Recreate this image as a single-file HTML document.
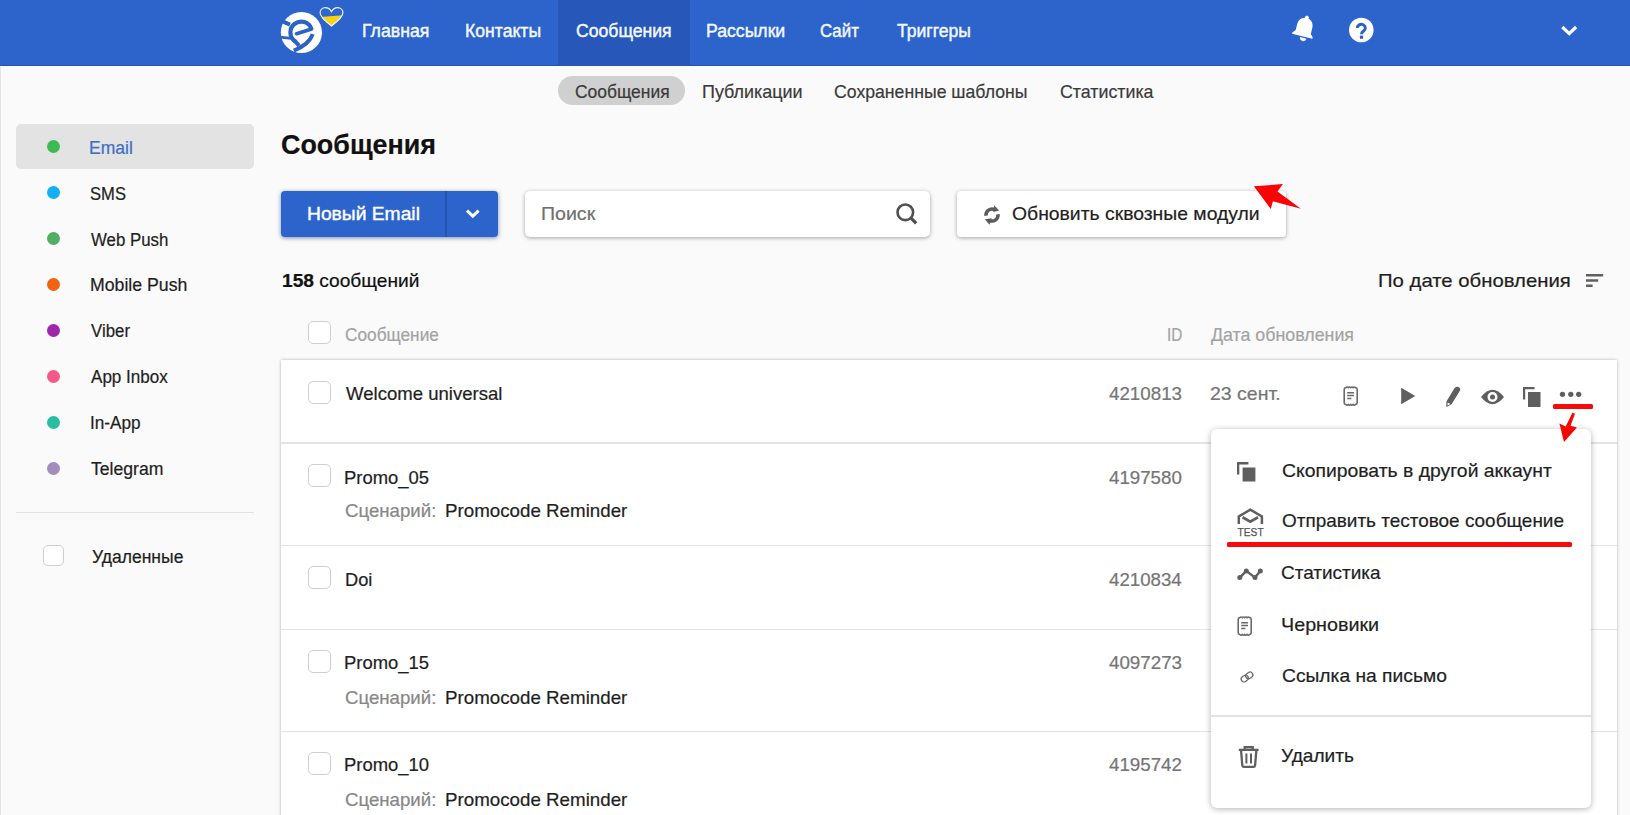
<!DOCTYPE html>
<html lang="ru"><head><meta charset="utf-8"><title>Сообщения</title>
<style>
*{box-sizing:border-box;margin:0;padding:0}
html,body{width:1630px;height:815px;overflow:hidden;background:#fafafa;font-family:"Liberation Sans",sans-serif}
.abs,.t,svg.i{position:absolute}
.t{white-space:nowrap;transform-origin:0 50%;-webkit-text-stroke:0.22px currentColor}
.t b{font-weight:700}
#hdr{left:0;top:0;width:1630px;height:65.7px;background:#2c64cc;box-shadow:inset 0 -1px 0 rgba(20,50,120,.35)}
#act{left:558.4px;top:0;width:131.2px;height:65.7px;background:#2758b9}
#pill{left:558.3px;top:76px;width:126.6px;height:29px;border-radius:14.5px;background:#d0d0d0}
#sel{left:16px;top:124px;width:238.3px;height:45.4px;border-radius:5px;background:#e3e3e3}
.dot{width:13.2px;height:13.2px;border-radius:50%;left:46.9px}
#sdiv{left:16px;top:511.9px;width:238px;height:1.2px;background:#e2e2e2}
.cb{width:22.5px;height:22.5px;border:1.5px solid #cfcfcf;border-radius:5px;background:#fff;left:308.3px}
#btn{left:281px;top:191px;width:217px;height:45.6px;border-radius:4px;background:#2c64cc;box-shadow:0 1px 4px rgba(20,50,120,.55)}
#btnd{left:445.4px;top:191px;width:1.5px;height:45.6px;background:#2555b3}
#srch{left:524.8px;top:190.8px;width:405.6px;height:45.8px;border-radius:5px;background:#fff;box-shadow:0 1px 4px rgba(0,0,0,.35)}
#upd{left:956.7px;top:191px;width:329.6px;height:46px;border-radius:4px;background:#fff;box-shadow:0 1px 4px rgba(0,0,0,.35)}
#card{left:281px;top:359.8px;width:1336.2px;height:470px;background:#fff;box-shadow:0 0 3px rgba(0,0,0,.3)}
.rd{left:281px;width:1336px;height:1.3px;background:#e4e4e4}
#menu{left:1211px;top:429.4px;width:380.3px;height:378.4px;border-radius:6px;background:#fff;box-shadow:0 1px 6px rgba(0,0,0,.3)}
#mdiv{left:1211px;top:715.1px;width:380px;height:1.5px;background:#e2e2e2}
.red{background:#f80a0a}
</style></head><body>
<div class="abs" id="hdr"></div><div class="abs" id="act"></div>
<div class="abs" style="left:0;top:67px;width:1.300px;height:750px;background:#e6e6e6"></div><div class="abs" id="pill"></div><div class="abs" id="sel"></div>
<!-- logo -->
<svg class="i" style="left:272px;top:2px" width="80" height="60" viewBox="0 0 80 60">
 <circle cx="29.4" cy="30.5" r="20.6" fill="#fff"/>
 <g fill="none" stroke="#2c62c6" stroke-linecap="round">
  <path d="M39.4 26.9 A10.8 10.8 0 1 0 22.9 39.2" stroke-width="4.2" stroke-linecap="butt"/>
  <path d="M40.7 32.2 Q37.2 42.6 21.8 48.6" stroke-width="4" stroke-linecap="butt"/>
  <path d="M22.4 38.4 L27.2 43.8" stroke-width="4" stroke-linecap="butt"/>
  <path d="M24.6 31.7 L39.6 27.1" stroke-width="3.7"/>
  <path d="M18 22.6 L10 19.2" stroke-width="4" stroke-linecap="butt"/>
  <path d="M19 36.3 L8 35.2" stroke-width="2.8" stroke-linecap="butt"/>
 </g>
 <g transform="translate(47.5,5)">
  <clipPath id="hc"><path d="M12 18.9 C4 13 0.6 9.5 0.6 5.8 C0.6 2.8 2.9 0.6 5.8 0.6 C8.4 0.6 10.6 2 12 4.6 C13.4 2 15.6 0.6 18.2 0.6 C21.100 0.6 23.4 2.8 23.4 5.8 C23.4 9.5 20 13 12 18.9Z"/></clipPath>
  <g clip-path="url(#hc)"><rect x="0" y="0" width="24" height="20" fill="#2f66cc"/><path d="M0 10.1 L24 8.2 V20 H0Z" fill="#f7d313"/></g>
  <path d="M12 18.900 C4 13 0.600 9.500 0.600 5.800 C0.600 2.800 2.900 0.600 5.800 0.600 C8.400 0.600 10.600 2 12 4.600 C13.400 2 15.600 0.600 18.200 0.600 C21.100 0.600 23.400 2.800 23.400 5.800 C23.400 9.500 20 13 12 18.900Z" fill="none" stroke="#eef3fb" stroke-width="1.200"/>
 </g>
</svg>
<!-- bell -->
<svg class="i" style="left:1288.500px;top:12.200px" width="30" height="34" viewBox="0 0 30 34">
 <g transform="rotate(14 15 17)" fill="#fff">
  <path d="M15 3.300 c1.200 0 2 .8 2 2 v.6 c3.800 1 5.800 4.200 5.800 8.200 v6 l2.700 3 v1.300 h-21 v-1.300 l2.700 -3 v-6 c0 -4 2 -7.200 5.800 -8.200 v-.6 c0 -1.200 .8 -2 2 -2z"/>
  <path d="M13.200 25.800 a3.200 3.200 0 0 0 6.400 0z"/>
 </g>
</svg>
<!-- help -->
<svg class="i" style="left:1348px;top:17px" width="26" height="26" viewBox="0 0 26 26">
 <circle cx="13.3" cy="13" r="12.300" fill="#fff"/>
 <path d="M9.300 11 a4 3.700 0 1 1 6.200 3.100 c-1.400 .9 -2 1.600 -2 3.100" fill="none" stroke="#2c62c6" stroke-width="3"/>
 <rect x="11.900" y="18.600" width="3.200" height="3.200" fill="#2c62c6"/>
</svg>
<!-- user chevron -->
<svg class="i" style="left:1559px;top:23px" width="20" height="16" viewBox="0 0 20 16"><path d="M3.300 4 L10.200 10.600 L17.100 4" fill="none" stroke="#fff" stroke-width="3.200"/></svg>

<!-- sidebar -->
<div class="abs dot" style="top:140.3px;background:#3dbb52"></div>
<div class="abs dot" style="top:186.2px;background:#12b0f2"></div>
<div class="abs dot" style="top:232.1px;background:#52ae62"></div>
<div class="abs dot" style="top:278.0px;background:#ee6410"></div>
<div class="abs dot" style="top:323.9px;background:#9e27ac"></div>
<div class="abs dot" style="top:369.8px;background:#f5588a"></div>
<div class="abs dot" style="top:415.7px;background:#27bfa0"></div>
<div class="abs dot" style="top:461.6px;background:#a38dbd"></div>
<div class="abs" id="sdiv"></div>
<div class="abs cb" style="left:43.2px;top:545.2px;width:21px;height:21px"></div>

<!-- toolbar -->
<div class="abs" id="btn"></div><div class="abs" id="btnd"></div>
<svg class="i" style="left:463px;top:206px" width="20" height="16" viewBox="0 0 20 16"><path d="M4 4.600 L9.800 10.200 L15.600 4.600" fill="none" stroke="#fff" stroke-width="3"/></svg>
<div class="abs" id="srch"></div>
<svg class="i" style="left:893px;top:200px" width="28" height="28" viewBox="0 0 28 28"><circle cx="12.300" cy="12.300" r="7.800" fill="none" stroke="#505050" stroke-width="2.600"/><path d="M17.600 17.600 L23.200 23.300" stroke="#505050" stroke-width="3.300"/></svg>
<div class="abs" id="upd"></div>
<!-- refresh icon -->
<svg class="i" style="left:981px;top:204px" width="22" height="22" viewBox="0 0 22 22">
 <g fill="none" stroke="#5c5c5c" stroke-width="3.500"><path d="M5 11.700 A6 6 0 0 1 13.600 5.600"/><path d="M17 10.300 A6 6 0 0 1 8.800 16.600"/></g>
 <path d="M13.200 1.300 L18.100 6.600 L12.300 7.900Z" fill="#5c5c5c"/><path d="M10.800 14.300 L8.400 20.800 L3.900 15.300Z" fill="#5c5c5c"/>
</svg>
<!-- red arrow top -->
<svg class="i" style="left:1245px;top:175px" width="64" height="42" viewBox="0 0 64 42"><path d="M8.900 11.300 L37.900 9.100 L32.500 16.500 L55.900 33.700 L27.900 26.300 L25.800 34 Z" fill="#fc0303"/></svg>
<!-- sort icon -->
<svg class="i" style="left:1584px;top:270px" width="24" height="20" viewBox="0 0 24 20"><path d="M2 5.200 H19.200 M2 10.500 H14.200 M2 15.800 H8.600" stroke="#606060" stroke-width="2.400"/></svg>

<!-- table -->
<div class="abs cb" style="top:321.3px"></div>
<div class="abs" id="card"></div>
<div class="abs rd" style="top:442.4px"></div><div class="abs rd" style="top:544.5px"></div><div class="abs rd" style="top:628.5px"></div><div class="abs rd" style="top:730.5px"></div>
<div class="abs cb" style="top:381.2px"></div>
<div class="abs cb" style="top:464.4px"></div>
<div class="abs cb" style="top:566.4px"></div>
<div class="abs cb" style="top:650.4px"></div>
<div class="abs cb" style="top:752.4px"></div>
<div class="t" style="left:362.48px;top:21px;font-size:18px;line-height:21.6px;font-weight:400;color:#f4f7fd;transform:scaleX(0.9829);-webkit-text-stroke:0.45px #f4f7fd;">Главная</div><div class="t" style="left:464.79px;top:21px;font-size:18px;line-height:21.6px;font-weight:400;color:#f4f7fd;transform:scaleX(0.9780);-webkit-text-stroke:0.45px #f4f7fd;">Контакты</div><div class="t" style="left:575.79px;top:21px;font-size:18px;line-height:21.6px;font-weight:400;color:#f4f7fd;transform:scaleX(0.9782);-webkit-text-stroke:0.45px #f4f7fd;">Сообщения</div><div class="t" style="left:706.19px;top:21px;font-size:18px;line-height:21.6px;font-weight:400;color:#f4f7fd;transform:scaleX(0.9805);-webkit-text-stroke:0.45px #f4f7fd;">Рассылки</div><div class="t" style="left:819.53px;top:21px;font-size:18px;line-height:21.6px;font-weight:400;color:#f4f7fd;transform:scaleX(0.9365);-webkit-text-stroke:0.45px #f4f7fd;">Сайт</div><div class="t" style="left:896.57px;top:21px;font-size:18px;line-height:21.6px;font-weight:400;color:#f4f7fd;transform:scaleX(0.9745);-webkit-text-stroke:0.45px #f4f7fd;">Триггеры</div><div class="t" style="left:574.62px;top:81px;font-size:19px;line-height:22.8px;font-weight:400;color:#3a3a3a;transform:scaleX(0.9175);">Сообщения</div><div class="t" style="left:701.72px;top:81px;font-size:19px;line-height:22.8px;font-weight:400;color:#3a3a3a;transform:scaleX(0.9432);">Публикации</div><div class="t" style="left:834.36px;top:81px;font-size:19px;line-height:22.8px;font-weight:400;color:#3a3a3a;transform:scaleX(0.9296);">Сохраненные шаблоны</div><div class="t" style="left:1060.32px;top:81px;font-size:19px;line-height:22.8px;font-weight:400;color:#3a3a3a;transform:scaleX(0.9368);">Статистика</div><div class="t" style="left:89.28px;top:138px;font-size:18px;line-height:21.6px;font-weight:400;color:#3f6fc6;transform:scaleX(0.9739);">Email</div><div class="t" style="left:90.1px;top:184px;font-size:18px;line-height:21.6px;font-weight:400;color:#1f1f1f;transform:scaleX(0.9222);">SMS</div><div class="t" style="left:90.6px;top:230px;font-size:18px;line-height:21.6px;font-weight:400;color:#1f1f1f;transform:scaleX(0.9343);">Web Push</div><div class="t" style="left:89.81px;top:275px;font-size:18px;line-height:21.6px;font-weight:400;color:#1f1f1f;transform:scaleX(0.9829);">Mobile Push</div><div class="t" style="left:90.84px;top:321px;font-size:18px;line-height:21.6px;font-weight:400;color:#1f1f1f;transform:scaleX(0.9351);">Viber</div><div class="t" style="left:90.56px;top:367px;font-size:18px;line-height:21.6px;font-weight:400;color:#1f1f1f;transform:scaleX(0.9478);">App Inbox</div><div class="t" style="left:89.57px;top:413px;font-size:18px;line-height:21.6px;font-weight:400;color:#1f1f1f;transform:scaleX(0.9537);">In-App</div><div class="t" style="left:90.54px;top:459px;font-size:18px;line-height:21.6px;font-weight:400;color:#1f1f1f;transform:scaleX(0.9786);">Telegram</div><div class="t" style="left:91.61px;top:547px;font-size:18px;line-height:21.6px;font-weight:400;color:#1f1f1f;transform:scaleX(0.9732);">Удаленные</div><div class="t" style="left:280.61px;top:129px;font-size:27px;line-height:32.4px;font-weight:700;color:#111;transform:scaleX(0.9963);">Сообщения</div><div class="t" style="left:307.3px;top:203px;font-size:19px;line-height:22.8px;font-weight:400;color:#fff;transform:scaleX(1.0133);-webkit-text-stroke:0.4px #fff;">Новый Email</div><div class="t" style="left:541.19px;top:203px;font-size:19px;line-height:22.8px;font-weight:400;color:#6f6f6f;transform:scaleX(1.0295);">Поиск</div><div class="t" style="left:1011.69px;top:203px;font-size:19px;line-height:22.8px;font-weight:400;color:#1f1f1f;transform:scaleX(1.0184);">Обновить сквозные модули</div><div class="t" style="left:281.73px;top:270px;font-size:19px;line-height:22.8px;font-weight:400;color:#111;transform:scaleX(1.0072);"><b>158</b> сообщений</div><div class="t" style="left:1378.48px;top:270px;font-size:19px;line-height:22.8px;font-weight:400;color:#1f1f1f;transform:scaleX(1.0693);">По дате обновления</div><div class="t" style="left:344.53px;top:324px;font-size:19px;line-height:22.8px;font-weight:400;color:#a3a3a3;transform:scaleX(0.9079);">Сообщение</div><div class="t" style="left:1166.95px;top:324px;font-size:19px;line-height:22.8px;font-weight:400;color:#a3a3a3;transform:scaleX(0.8088);">ID</div><div class="t" style="left:1210.93px;top:324px;font-size:19px;line-height:22.8px;font-weight:400;color:#a3a3a3;transform:scaleX(0.9371);">Дата обновления</div><div class="t" style="left:345.58px;top:383px;font-size:19px;line-height:22.8px;font-weight:400;color:#1f1f1f;transform:scaleX(0.9768);">Welcome universal</div><div class="t" style="left:1109.23px;top:383px;font-size:19px;line-height:22.8px;font-weight:400;color:#757575;transform:scaleX(0.9873);">4210813</div><div class="t" style="left:344.43px;top:467px;font-size:19px;line-height:22.8px;font-weight:400;color:#1f1f1f;transform:scaleX(0.9711);">Promo_05</div><div class="t" style="left:1109.23px;top:467px;font-size:19px;line-height:22.8px;font-weight:400;color:#757575;transform:scaleX(0.9845);">4197580</div><div class="t" style="left:345.17px;top:500px;font-size:19px;line-height:22.8px;font-weight:400;color:#878787;transform:scaleX(0.9813);">Сценарий:</div><div class="t" style="left:445.38px;top:500px;font-size:19px;line-height:22.8px;font-weight:400;color:#1f1f1f;transform:scaleX(0.9867);">Promocode Reminder</div><div class="t" style="left:344.54px;top:569px;font-size:19px;line-height:22.8px;font-weight:400;color:#1f1f1f;transform:scaleX(0.9611);">Doi</div><div class="t" style="left:1109.23px;top:569px;font-size:19px;line-height:22.8px;font-weight:400;color:#757575;transform:scaleX(0.9821);">4210834</div><div class="t" style="left:344.43px;top:652px;font-size:19px;line-height:22.8px;font-weight:400;color:#1f1f1f;transform:scaleX(0.9711);">Promo_15</div><div class="t" style="left:1109.23px;top:652px;font-size:19px;line-height:22.8px;font-weight:400;color:#757575;transform:scaleX(0.9873);">4097273</div><div class="t" style="left:345.17px;top:687px;font-size:19px;line-height:22.8px;font-weight:400;color:#878787;transform:scaleX(0.9813);">Сценарий:</div><div class="t" style="left:445.38px;top:687px;font-size:19px;line-height:22.8px;font-weight:400;color:#1f1f1f;transform:scaleX(0.9867);">Promocode Reminder</div><div class="t" style="left:344.43px;top:754px;font-size:19px;line-height:22.8px;font-weight:400;color:#1f1f1f;transform:scaleX(0.9712);">Promo_10</div><div class="t" style="left:1109.23px;top:754px;font-size:19px;line-height:22.8px;font-weight:400;color:#757575;transform:scaleX(0.9864);">4195742</div><div class="t" style="left:345.17px;top:789px;font-size:19px;line-height:22.8px;font-weight:400;color:#878787;transform:scaleX(0.9813);">Сценарий:</div><div class="t" style="left:445.38px;top:789px;font-size:19px;line-height:22.8px;font-weight:400;color:#1f1f1f;transform:scaleX(0.9867);">Promocode Reminder</div><div class="t" style="left:1209.53px;top:383px;font-size:19px;line-height:22.8px;font-weight:400;color:#757575;transform:scaleX(1.0256);">23 сент.</div>
<!-- row icons -->
<svg class="i" style="left:1340px;top:384px" width="22" height="26" viewBox="0 0 22 26"><path d="M4.200 19 V5.500 Q4.200 3.800 5.800 3.600 Q7 2.300 8.300 3.600 Q9.500 2.300 10.700 3.600 Q11.900 2.300 13.100 3.600 Q14.300 2.300 15.600 3.600 Q17.200 3.800 17.200 5.500 V18.600 Q17.200 20.300 15.600 20.500 Q14.300 21.800 13.100 20.500 Q11.900 21.800 10.700 20.500 Q9.500 21.800 8.300 20.500 Q7 21.800 5.800 20.500 Q4.200 20.300 4.200 18.600 Z" fill="none" stroke="#6a6a6a" stroke-width="1.600"/><path d="M7.200 8.700 H14 M7.200 11.600 H14 M7.200 14.500 H11.400" stroke="#6a6a6a" stroke-width="1.500"/></svg>
<svg class="i" style="left:1398px;top:386px" width="20" height="20" viewBox="0 0 20 20"><path d="M3.200 1.800 L17.300 10 L3.200 18.200Z" fill="#5f5f5f"/></svg>
<svg class="i" style="left:1442px;top:384px" width="24" height="26" viewBox="0 0 24 26"><path d="M12.300 4.600 Q13.800 1.900 16.500 3.100 Q19 4.500 17.900 6.700 L9.600 20.200 L4.200 23.100 L4.400 17.500 Z" fill="#5f5f5f"/><path d="M5.700 18.600 L8.300 20 L5.400 21.500 Z" fill="#fff"/></svg>
<svg class="i" style="left:1480px;top:386px" width="26" height="22" viewBox="0 0 26 22"><path d="M1 11 Q12.500 -3.500 24 11 Q12.500 25.500 1 11Z" fill="#5f5f5f"/><circle cx="12.500" cy="11" r="5" fill="#fff"/><circle cx="12.500" cy="11" r="2.500" fill="#5f5f5f"/></svg>
<svg class="i" style="left:1521px;top:385px" width="22" height="24" viewBox="0 0 22 24"><path d="M2 14.500 V2 H13.500 V4.200 H4.200 V14.500Z" fill="#5f5f5f"/><rect x="7" y="7" width="12.500" height="15" fill="#5f5f5f"/></svg>
<svg class="i" style="left:1558px;top:388px" width="28" height="12" viewBox="0 0 28 12" fill="#5f5f5f"><circle cx="4.500" cy="6.300" r="2.650"/><circle cx="12.800" cy="6.300" r="2.650"/><circle cx="20.700" cy="6.300" r="2.650"/></svg>
<div class="abs red" style="left:1553.2px;top:404.2px;width:39.4px;height:5.200px;border-radius:1.500px"></div>

<!-- menu -->
<div class="abs" id="menu"></div><div class="abs" id="mdiv"></div>
<svg class="i" style="left:1555px;top:411px" width="26" height="34" viewBox="0 0 26 34"><path d="M17.400 1.700 L20 2.800 L15.500 14.700 L21.900 16.400 L9 30.900 L4.400 12.600 L10.700 15.500 Z" fill="#fc0303"/></svg>
<div class="t" style="left:1281.62px;top:460px;font-size:19px;line-height:22.8px;font-weight:400;color:#1f1f1f;transform:scaleX(1.0191);">Скопировать в другой аккаунт</div><div class="t" style="left:1281.69px;top:510px;font-size:19px;line-height:22.8px;font-weight:400;color:#1f1f1f;transform:scaleX(0.9972);">Отправить тестовое сообщение</div><div class="t" style="left:1281.26px;top:562px;font-size:19px;line-height:22.8px;font-weight:400;color:#1f1f1f;transform:scaleX(0.9968);">Статистика</div><div class="t" style="left:1280.74px;top:614px;font-size:19px;line-height:22.8px;font-weight:400;color:#1f1f1f;transform:scaleX(1.0387);">Черновики</div><div class="t" style="left:1281.62px;top:665px;font-size:19px;line-height:22.8px;font-weight:400;color:#1f1f1f;transform:scaleX(1.0126);">Ссылка на письмо</div><div class="t" style="left:1281.29px;top:745px;font-size:19px;line-height:22.8px;font-weight:400;color:#1f1f1f;transform:scaleX(1.0045);">Удалить</div>
<svg class="i" style="left:1235px;top:460px" width="24" height="24" viewBox="0 0 24 24"><path d="M2 14.500 V2.100 H13.400 V4.400 H4.300 V14.500Z" fill="#5f5f5f"/><rect x="7.600" y="7.500" width="12.800" height="14" fill="#5f5f5f"/></svg>
<svg class="i" style="left:1234px;top:506px" width="32" height="34" viewBox="0 0 32 34"><path d="M4.800 18.100 V10.400 L16.300 3.600 L27.900 10.400 V18.100" fill="none" stroke="#5f5f5f" stroke-width="2.500"/><path d="M8.600 11.300 L16.300 15.600 L24 11.300" fill="none" stroke="#5f5f5f" stroke-width="2.700"/><text x="3.600" y="29.800" font-family="Liberation Sans, sans-serif" font-size="11.700" fill="#555" stroke="#555" stroke-width="0.250" textLength="26" lengthAdjust="spacingAndGlyphs">TEST</text></svg>
<svg class="i" style="left:1235px;top:563px" width="30" height="20" viewBox="0 0 30 20"><path d="M4.800 14.600 L11.300 7.900 L20 14.600 L25.300 7.900" fill="none" stroke="#5f5f5f" stroke-width="2.400" stroke-linejoin="round"/><circle cx="4.800" cy="14.600" r="2.500" fill="#5f5f5f"/><circle cx="11.300" cy="7.900" r="2.500" fill="#5f5f5f"/><circle cx="20" cy="14.600" r="2.500" fill="#5f5f5f"/><circle cx="25.300" cy="7.900" r="2.500" fill="#5f5f5f"/></svg>
<svg class="i" style="left:1233.600px;top:613.900px" width="22" height="26" viewBox="0 0 22 26"><path d="M4.200 19 V5.500 Q4.200 3.800 5.800 3.600 Q7 2.300 8.300 3.600 Q9.500 2.300 10.700 3.600 Q11.900 2.300 13.100 3.600 Q14.300 2.300 15.600 3.600 Q17.200 3.800 17.200 5.500 V18.600 Q17.200 20.300 15.600 20.500 Q14.300 21.800 13.100 20.500 Q11.900 21.800 10.700 20.500 Q9.500 21.800 8.300 20.500 Q7 21.800 5.800 20.500 Q4.200 20.300 4.200 18.600 Z" fill="none" stroke="#6a6a6a" stroke-width="1.600"/><path d="M7.200 8.700 H14 M7.200 11.600 H14 M7.200 14.500 H11.400" stroke="#6a6a6a" stroke-width="1.500"/></svg>
<svg class="i" style="left:1239px;top:670px" width="16" height="14" viewBox="0 0 16 14"><g fill="none" stroke="#6a6a6a" stroke-width="1.300" transform="rotate(-35 8 7)"><rect x="1.500" y="4.200" width="7.500" height="5.600" rx="2.800"/><rect x="7" y="4.200" width="7.500" height="5.600" rx="2.800"/></g></svg>
<svg class="i" style="left:1236px;top:743px" width="26" height="28" viewBox="0 0 26 28"><path d="M2.800 6.800 H22.600 M8.700 6.300 V4.100 H16.700 V6.300" fill="none" stroke="#5f5f5f" stroke-width="2.300"/><path d="M5.100 8 L6.300 22.300 Q6.500 23.900 8 23.900 H17.400 Q18.900 23.900 19.100 22.300 L20.300 8" fill="none" stroke="#5f5f5f" stroke-width="2.300"/><path d="M10.400 10.500 V20.600 M15 10.500 V20.600" stroke="#5f5f5f" stroke-width="2"/></svg>
<div class="abs red" style="left:1226.5px;top:542.3px;width:345px;height:4.8px;border-radius:1.600px"></div>
</body></html>
